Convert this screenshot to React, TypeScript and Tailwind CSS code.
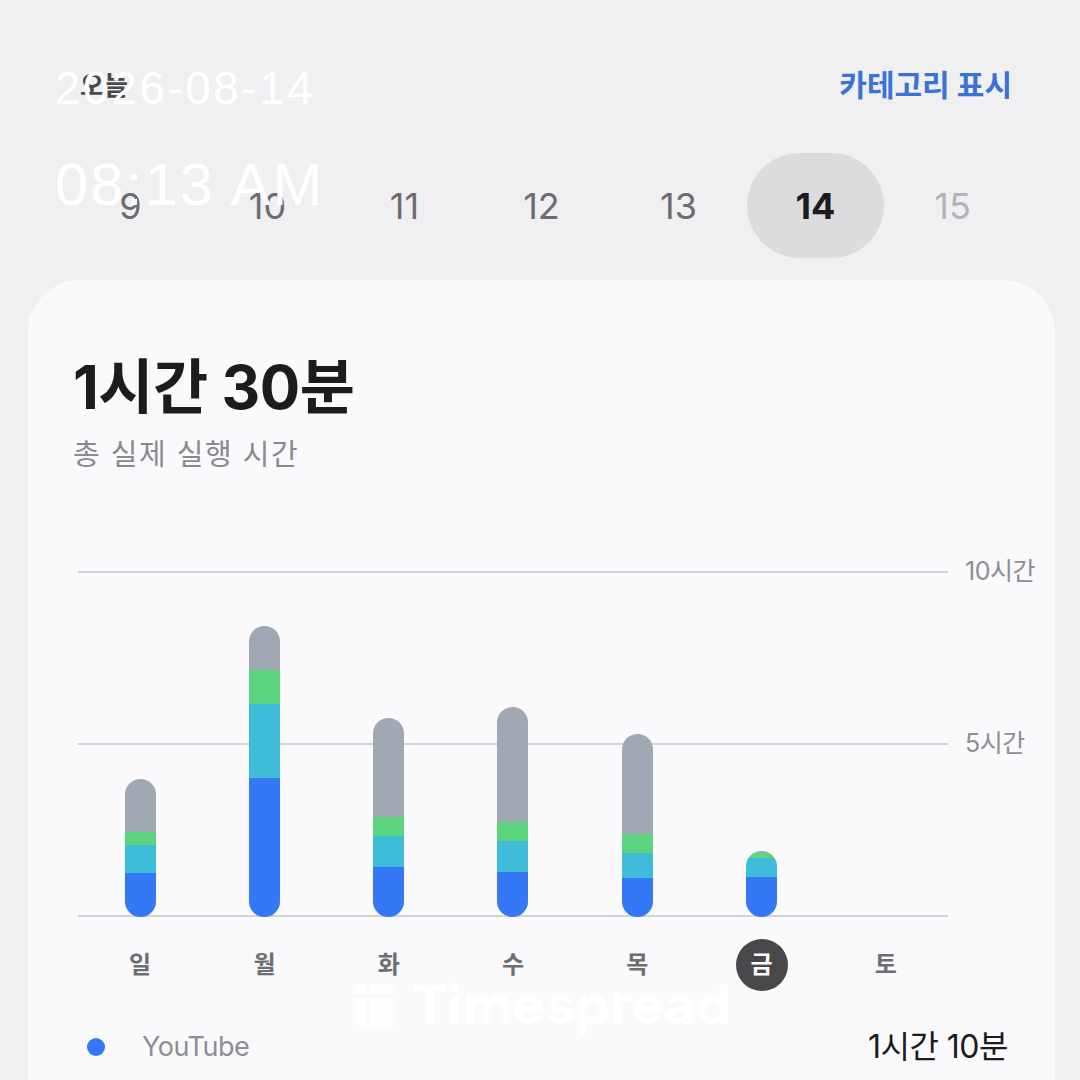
import React from "react";

const FONT = { fontFamily: "Inter, 'Noto Sans CJK KR', sans-serif" };

type Bar = { gray: number; green: number; cyan: number; blue: number };

const days: { label: string; bar?: Bar; today?: boolean }[] = [
  { label: "일", bar: { gray: 53, green: 13, cyan: 28, blue: 44 } },
  { label: "월", bar: { gray: 44, green: 34, cyan: 74, blue: 139 } },
  { label: "화", bar: { gray: 99, green: 19, cyan: 31, blue: 50 } },
  { label: "수", bar: { gray: 115, green: 19, cyan: 31, blue: 45 } },
  { label: "목", bar: { gray: 100, green: 19, cyan: 25, blue: 39 } },
  { label: "금", bar: { gray: 2, green: 5, cyan: 19, blue: 40 }, today: true },
  { label: "토" },
];

const dates = [9, 10, 11, 12, 13, 14, 15];

function StackedBar({ bar }: { bar: Bar }) {
  return (
    <div className="flex w-[31px] flex-col overflow-hidden rounded-full">
      <div className="bg-[#a0a8b4]" style={{ height: bar.gray }} />
      <div className="bg-[#5dd480]" style={{ height: bar.green }} />
      <div className="bg-[#3ebcd8]" style={{ height: bar.cyan }} />
      <div className="bg-[#3578f6]" style={{ height: bar.blue }} />
    </div>
  );
}

export default function App() {
  return (
    <div className="relative h-[1080px] w-[1080px] overflow-hidden bg-[#f0f0f2]" style={FONT}>
      {/* header */}
      <div className="mt-[55px] flex h-[60px] items-center justify-between pl-[80px] pr-[68px]">
        <span className="text-[26px] font-bold text-[#4a4a4e]">오늘</span>
        <span className="text-[30px] font-bold text-[#3a72d8]">카테고리 표시</span>
      </div>

      {/* date strip */}
      <div className="mt-[38px] flex pl-[62px]">
        {dates.map((d) => (
          <div
            key={d}
            className={
              d === 14
                ? "flex h-[105px] w-[137px] items-center justify-center rounded-full bg-[#dcdcde] text-[36px] font-bold text-[#1c1c1e]"
                : d === 15
                  ? "flex h-[105px] w-[137px] items-center justify-center text-[36px] text-[#b4b4b8]"
                  : "flex h-[105px] w-[137px] items-center justify-center text-[36px] text-[#6c6c70]"
            }
          >
            {d}
          </div>
        ))}
      </div>

      {/* card */}
      <div className="ml-[28px] mt-[22px] h-[900px] w-[1027px] rounded-[52px] bg-[#fafafc] pl-[45px] pt-[75px]">
        <div className="text-[60px] font-bold leading-[64px] tracking-[-0.5px] text-[#1c1c1e]">1시간 30분</div>
        <div className="mt-[17px] text-[29px] leading-[38px] tracking-[1.5px] text-[#8a8a8e]">총 실제 실행 시간</div>

        {/* chart */}
        <div className="relative ml-[5px] mt-[97px] h-[346px] w-[870px]">
          <div className="absolute left-0 right-0 top-0 border-t-2 border-[#d4d4d8]" />
          <div className="absolute left-0 right-0 top-[172px] border-t-2 border-[#d4d4d8]" />
          <div className="absolute bottom-0 left-0 right-0 border-t-2 border-[#d4d4d8]" />
          <span className="absolute left-[887px] top-[-16px] whitespace-nowrap text-[25px] leading-[32px] tracking-[-0.5px] text-[#8e8e93]">10시간</span>
          <span className="absolute left-[887px] top-[156px] whitespace-nowrap text-[25px] leading-[32px] tracking-[-0.5px] text-[#8e8e93]">5시간</span>
          <div className="absolute inset-0 grid grid-cols-7 items-end">
            {days.map((d) => (
              <div key={d.label} className="flex justify-center">
                {d.bar && <StackedBar bar={d.bar} />}
              </div>
            ))}
          </div>
        </div>

        {/* day labels */}
        <div className="ml-[5px] mt-[22px] grid w-[870px] grid-cols-7">
          {days.map((d) => (
            <div key={d.label} className="flex h-[52px] items-center justify-center">
              {d.today ? (
                <span className="flex h-[52px] w-[52px] items-center justify-center rounded-full bg-[#48484a] text-[24px] font-semibold text-white">
                  {d.label}
                </span>
              ) : (
                <span className="text-[24px] font-semibold text-[#6e6e72]">{d.label}</span>
              )}
            </div>
          ))}
        </div>

        {/* legend row */}
        <div className="mt-[31px] flex h-[50px] items-center justify-between pr-[47px]">
          <div className="flex items-center">
            <span className="ml-[14px] h-[18px] w-[18px] rounded-full bg-[#3578f6]" />
            <span className="ml-[37px] text-[27px] tracking-[-0.5px] text-[#8e8e93]">YouTube</span>
          </div>
          <span className="text-[32px] tracking-[-0.5px] text-[#1c1c1e]">1시간 10분</span>
        </div>
      </div>

      {/* watermark */}
      <div className="absolute left-[355px] top-[978px] flex items-center gap-[16px] text-white/90">
        <svg width="40" height="42" viewBox="0 0 40 42" fill="#ffffff" opacity="0.9">
          <rect x="0" y="0" width="11" height="10" />
          <rect x="0" y="15" width="11" height="27" />
          <rect x="15" y="0" width="25" height="10" />
          <rect x="15" y="15" width="25" height="27" />
        </svg>
        <span className="text-[54px] font-bold leading-[54px] tracking-[0.5px]">Timespread</span>
      </div>

      {/* timestamp overlay */}
      <div
        className="absolute left-[55px] top-[60px] text-[46px] leading-[56px] tracking-[2.5px] text-white"
        style={{ fontFamily: "'Liberation Sans', Arial, sans-serif" }}
      >
        2026-08-14
      </div>
      <div
        className="absolute left-[55px] top-[150px] text-[60px] leading-[70px] tracking-[2px] text-white"
        style={{ fontFamily: "'Liberation Sans', Arial, sans-serif" }}
      >
        08:13 AM
      </div>
    </div>
  );
}
